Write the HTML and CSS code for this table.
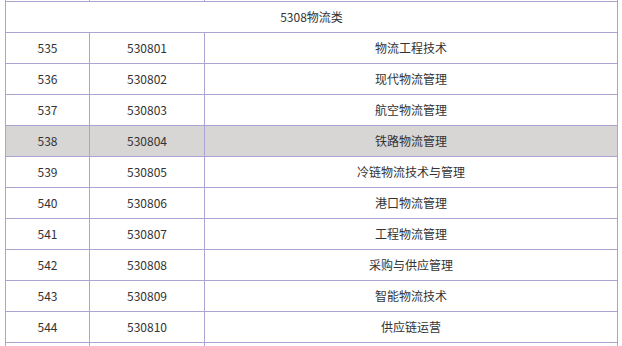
FILE: index.html
```html
<!DOCTYPE html>
<html lang="zh">
<head>
<meta charset="utf-8">
<link rel="stylesheet" href="styles.css">
</head>
<body>
<div class="wrap">
<table class="tbl">
<colgroup><col class="c1"><col class="c2"><col class="c3"></colgroup>
<tbody>
<tr><td></td><td></td><td></td></tr>
<tr><td colspan="3">5308物流类</td></tr>
<tr><td>535</td><td>530801</td><td>物流工程技术</td></tr>
<tr><td>536</td><td>530802</td><td>现代物流管理</td></tr>
<tr><td>537</td><td>530803</td><td>航空物流管理</td></tr>
<tr class="hl"><td>538</td><td>530804</td><td>铁路物流管理</td></tr>
<tr><td>539</td><td>530805</td><td>冷链物流技术与管理</td></tr>
<tr><td>540</td><td>530806</td><td>港口物流管理</td></tr>
<tr><td>541</td><td>530807</td><td>工程物流管理</td></tr>
<tr><td>542</td><td>530808</td><td>采购与供应管理</td></tr>
<tr><td>543</td><td>530809</td><td>智能物流技术</td></tr>
<tr><td>544</td><td>530810</td><td>供应链运营</td></tr>
<tr><td></td><td></td><td></td></tr>
</tbody>
</table>
</div>
</body>
</html>
```
FILE: styles.css
```css
html, body { margin: 0; padding: 0; background: #fff; }
.wrap { padding-left: 5px; height: 346px; overflow: hidden; }
.tbl {
  border-collapse: collapse;
  table-layout: fixed;
  width: 612px;
  margin-top: -30px;
  font-family: "Noto Sans CJK SC", "Noto Sans", sans-serif;
  font-size: 12px;
  color: #333;
}
.c1 { width: 84px; }
.c2 { width: 115px; }
.c3 { width: 413px; }
.tbl td {
  border: 1px solid #aaa3d4;
  height: 30px;
  padding: 0;
  text-align: center;
  vertical-align: middle;
  line-height: 16px;
}
.tbl tr.hl td { background: #d7d6d4; }
```
